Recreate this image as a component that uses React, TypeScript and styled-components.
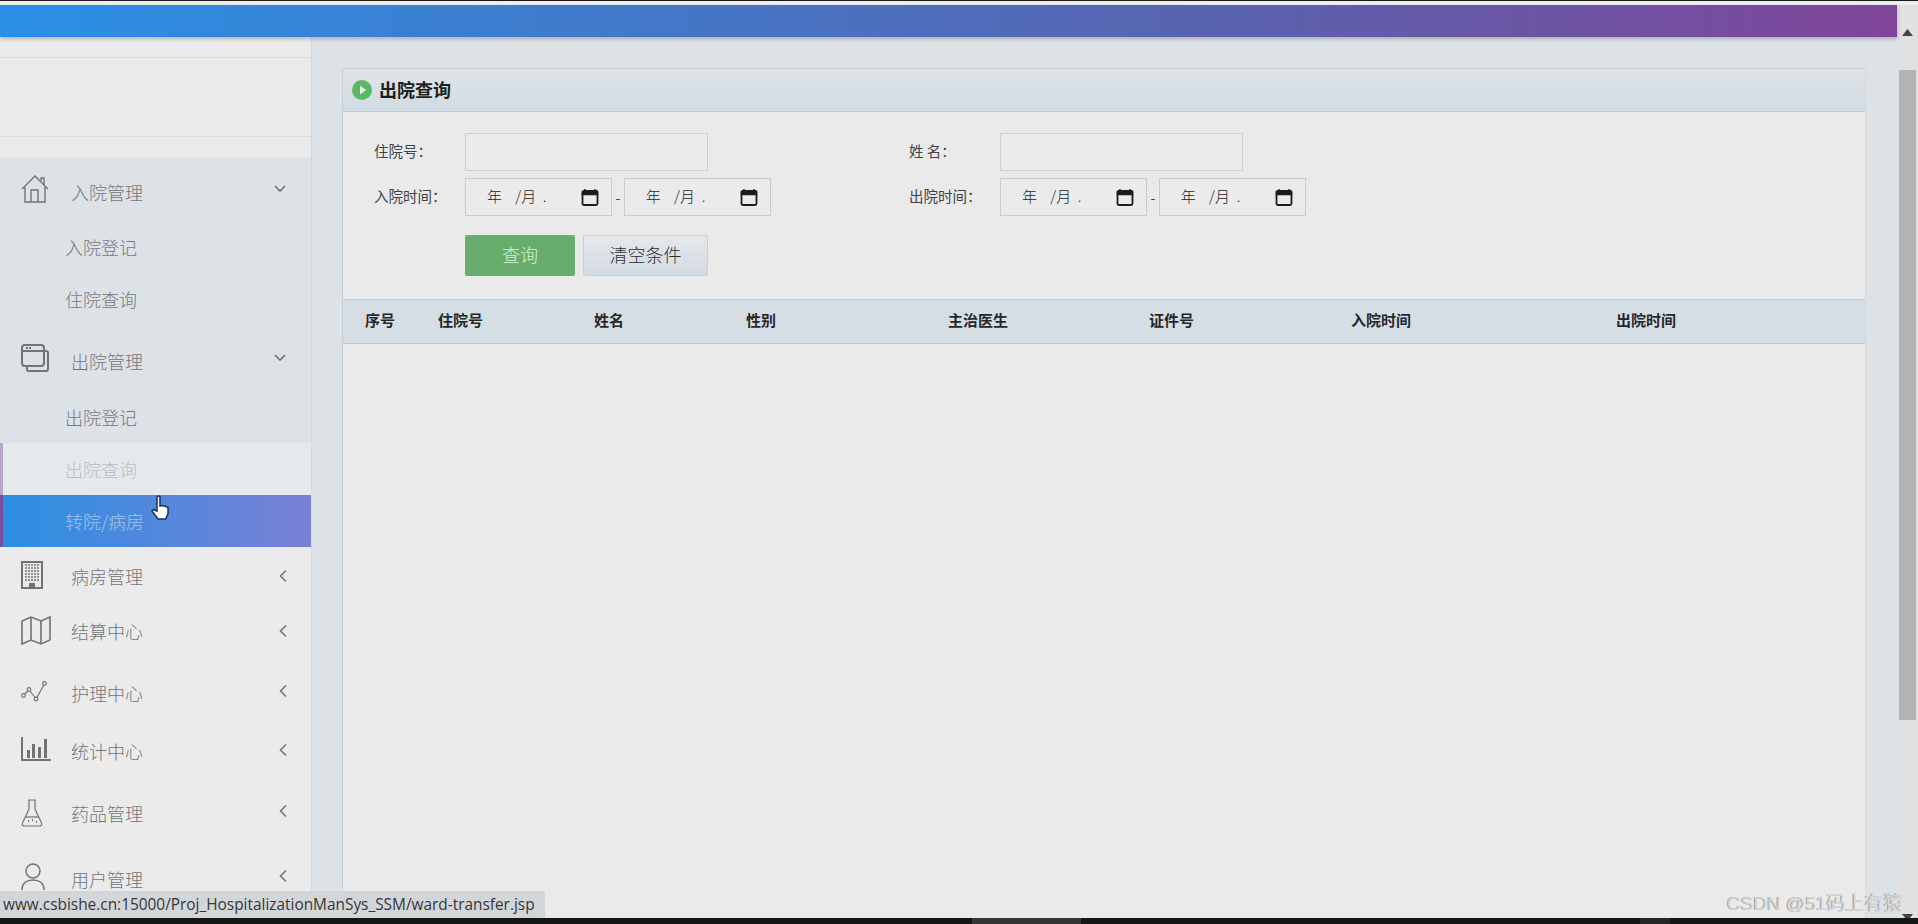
import React from "react";
import styled, { createGlobalStyle } from "styled-components";

const Global = createGlobalStyle`
  html, body { margin: 0; padding: 0; height: 100%; overflow: hidden; background: #ebebeb; }
  * { box-sizing: border-box; }
  body { font-family: "Noto Sans CJK SC", "Liberation Sans", sans-serif; }
`;

const Root = styled.div`
  position: relative;
  width: 1918px;
  height: 924px;
  display: flex;
  flex-direction: column;
  overflow: hidden;
`;
const TopEdge = styled.div`
  height: 5px;
  flex: none;
  background: linear-gradient(to bottom, #1a1a1a 0, #1a1a1a 1px, #eef0f0 1px, #eef0f0 100%);
`;
const Body = styled.div`
  flex: 1;
  min-height: 0;
  display: flex;
`;
const Page = styled.div`
  flex: 1;
  min-width: 0;
  display: flex;
  flex-direction: column;
`;
const Header = styled.div`
  height: 32px;
  flex: none;
  background: linear-gradient(to right, #2a90e6, #5a62ae 65%, #80459a);
  box-shadow: 0 2px 4px rgba(90, 90, 100, 0.4);
  position: relative;
  z-index: 2;
`;
const Content = styled.div`
  flex: 1;
  min-height: 0;
  display: flex;
`;
const Sidebar = styled.aside`
  width: 312px;
  flex: none;
  background: #ebebeb;
  border-right: 1px solid #d3d9df;
  display: flex;
  flex-direction: column;
`;
const Band = styled.div`
  height: 20px;
  flex: none;
`;
const ProfileBox = styled.div`
  height: 80px;
  flex: none;
  border-top: 1px solid #dcdcdc;
  border-bottom: 1px solid #dcdcdc;
`;
const OpenGroup = styled.div`
  background: #dde2e7;
  flex: none;
`;
const MenuRow = styled.div<{ $h: number }>`
  height: ${(p) => p.$h}px;
  flex: none;
  display: flex;
  align-items: center;
  padding: 0 21px 0 21px;
  color: #6f7479;
`;
const IconSlot = styled.span<{ $lift?: number }>`
  width: 50px;
  flex: none;
  display: flex;
  align-items: center;
  margin-bottom: ${(p) => (p.$lift ?? 0) * 2}px;
`;
const ChevronSlot = styled.span<{ $lift?: number }>`
  flex: none;
  display: flex;
  align-items: center;
  margin-bottom: ${(p) => (p.$lift ?? 0) * 2}px;
`;
const MenuText = styled.span<{ $drop?: boolean }>`
  flex: 1;
  font-size: 18px;
  font-weight: 300;
  line-height: 24px;
  color: #71767b;
  padding-top: ${(p) => (p.$drop ? 5 : 0)}px;
`;
const SubRow = styled.div<{ $state?: "hover" | "active" }>`
  height: 52px;
  display: flex;
  align-items: center;
  padding-left: ${(p) => (p.$state ? 62 : 65)}px;
  font-size: 18px;
  font-weight: 300;
  color: ${(p) => (p.$state === "hover" ? "#b9bdc1" : p.$state === "active" ? "#a0c4ee" : "#75797e")};
  background: ${(p) =>
    p.$state === "hover"
      ? "#e6e9ec"
      : p.$state === "active"
      ? "linear-gradient(to right, #2b8fe3, #7a80d5)"
      : "transparent"};
  border-left: ${(p) =>
    p.$state === "hover" ? "3px solid #b9a3cf" : p.$state === "active" ? "3px solid #7d4ba0" : "0"};
`;
const Main = styled.main`
  flex: 1;
  min-width: 0;
  background: #dde2e7;
  padding: 31px 31px 0 30px;
  display: flex;
`;
const Panel = styled.section`
  flex: 1;
  background: #eaeaea;
  border-left: 1px solid #c6ced4;
  border-right: 1px solid #d3d9de;
  display: flex;
  flex-direction: column;
`;
const PanelHead = styled.div`
  height: 44px;
  flex: none;
  display: flex;
  align-items: center;
  gap: 7px;
  padding-left: 9px;
  border-top: 1px solid #c6ced4;
  border-bottom: 1px solid #bccad4;
  background: linear-gradient(to bottom, #e0e4e8, #d0dbe3);
`;
const PanelTitle = styled.h2`
  margin: 0 0 2px;
  font-size: 18px;
  font-weight: 700;
  color: #1c1e20;
`;
const Form = styled.div`
  height: 187px;
  flex: none;
  padding: 21px 0 0 31px;
  display: grid;
  grid-template-columns: 91px 444px 91px 1fr;
  grid-template-rows: 38px 38px 1fr;
  row-gap: 7px;
  align-items: start;
`;
const Label = styled.label`
  font-size: 14.5px;
  line-height: 36px;
  color: #3f4347;
  white-space: pre;
`;
const TextInput = styled.div`
  width: 243px;
  height: 38px;
  border: 1px solid #cdd0d2;
  background: #ebebeb;
`;
const DateRange = styled.div`
  display: flex;
  align-items: center;
  gap: 3.5px;
  font-size: 14px;
  color: #444;
`;
const DateBox = styled.div`
  width: 147px;
  height: 38px;
  flex: none;
  display: flex;
  align-items: center;
  padding: 0 12px 0 21px;
  border: 1px solid #c9cccf;
  background: #ebebeb;
  font-size: 15px;
  font-weight: 300;
  color: #222;
`;
const DateText = styled.span`
  flex: 1;
  white-space: pre;
  padding-bottom: 3px;
`;
const Actions = styled.div`
  grid-column: 2;
  display: flex;
  gap: 8px;
  padding-top: 12px;
`;
const SearchBtn = styled.button`
  width: 110px;
  height: 41px;
  padding: 0 0 3px;
  border: 0;
  border-radius: 2px;
  background: #68ad6b;
  color: #d8f0d8;
  font: 300 18px "Noto Sans CJK SC", sans-serif;
`;
const ClearBtn = styled.button`
  width: 125px;
  height: 41px;
  padding: 0 0 3px;
  border: 1px solid #c5d0da;
  border-radius: 2px;
  background: linear-gradient(to bottom, #e6e9ec, #d2dae2);
  color: #2b2f33;
  font: 300 18px "Noto Sans CJK SC", sans-serif;
`;
const TableHead = styled.div`
  height: 45px;
  flex: none;
  display: grid;
  grid-template-columns: 73px 156px 152px 202px 201px 202px 265px 1fr;
  align-items: center;
  padding: 0 0 4px 22px;
  background: #d5dde5;
  border-top: 1px solid #c4cbd1;
  border-bottom: 1px solid #bcc6ce;
  font-size: 15px;
  font-weight: 700;
  color: #25282b;
`;
const Scrollbar = styled.div`
  width: 21px;
  flex: none;
  background: #e1e1e1;
  display: flex;
  flex-direction: column;
  align-items: center;
`;
const ArrowSlot = styled.div`
  height: 65px;
  flex: none;
  padding-top: 12px;
`;
const ArrowSlotBottom = styled.div`
  height: 16px;
  flex: none;
  margin-top: auto;
`;
const Thumb = styled.div`
  width: 17px;
  height: 650px;
  flex: none;
  background: #b3b3b3;
`;
const BottomBar = styled.div`
  height: 6px;
  flex: none;
  background: #141616;
  display: flex;
  padding-left: 972px;
  gap: 559px;
`;
const TaskChip = styled.div<{ $w: number; $c: string }>`
  width: ${(p) => p.$w}px;
  background: ${(p) => p.$c};
`;
const StatusBar = styled.div`
  position: absolute;
  left: 0;
  top: 891px;
  width: 545px;
  height: 27px;
  padding-left: 3px;
  background: #d3d6d9;
  color: #33363a;
  font: 15.4px/27px "Open Sans", sans-serif;
  white-space: nowrap;
`;
const Watermark = styled.div`
  position: absolute;
  left: 1727px;
  top: 891px;
  font-family: "Liberation Sans", "Noto Sans CJK SC", sans-serif;
  font-size: 19px;
  line-height: 26px;
  color: #d4d4d4;
  text-shadow: -1px 0 0 #9c9c9c;
  white-space: nowrap;
`;
const Cursor = styled.svg`
  position: absolute;
  left: 150px;
  top: 495px;
`;
const ChevronDownSvg = styled.svg`
  margin-right: 3px;
`;

const stroke = { fill: "none", stroke: "currentColor", strokeWidth: 1.4 } as const;

const HouseIcon = () => (
  <svg width="28" height="28" viewBox="0 0 28 28" {...stroke}>
    <path d="M1 14 L14 1 L27 14" />
    <path d="M20 6 V3 H23 V10" />
    <path d="M4 12 V27 H24 V12" />
    <path d="M10 27 V15 H17 V27" />
  </svg>
);
const WindowsIcon = () => (
  <svg width="28" height="28" viewBox="0 0 28 28" fill="none" stroke="currentColor" strokeWidth="2">
    <rect x="1" y="1" width="22" height="21" rx="3" />
    <path d="M1 7 H23" />
    <path d="M23 7 H25 A2 2 0 0 1 27 9 V25 A2 2 0 0 1 25 27 H9 A2 2 0 0 1 6 25 V22" />
    <path d="M5 4 H11" strokeDasharray="2 1" />
  </svg>
);
const BuildingIcon = () => (
  <svg width="22" height="28" viewBox="0 0 22 28">
    <rect x="1" y="1" width="20" height="26" fill="none" stroke="currentColor" strokeWidth="2" />
    <path d="M4 4 H18 M4 7 H18 M4 10 H18 M4 13 H18 M4 16 H18 M4 19 H18" stroke="currentColor" strokeWidth="1.6" strokeDasharray="2 1" />
    <rect x="8" y="22" width="6" height="5" fill="currentColor" />
  </svg>
);
const MapIcon = () => (
  <svg width="30" height="29" viewBox="0 0 30 29" {...stroke} strokeWidth={1.6}>
    <path d="M1 5 L10 1 L20 5 L29 1 V24 L20 28 L10 24 L1 28 Z" />
    <path d="M10 1 V24 M20 5 V28" />
  </svg>
);
const LineIcon = () => (
  <svg width="26" height="22" viewBox="0 0 26 22" {...stroke} strokeWidth={1.2}>
    <circle cx="2.5" cy="14.5" r="1.8" />
    <circle cx="8" cy="8.5" r="1.8" />
    <circle cx="15" cy="18" r="1.8" />
    <circle cx="23.5" cy="2.5" r="1.8" />
    <path d="M3.7 13 L6.8 10 M9 10 L14 16.5 M16 16.2 L22.7 4.2" />
  </svg>
);
const BarsIcon = () => (
  <svg width="30" height="24" viewBox="0 0 30 24">
    <path d="M1 0 V23 H30" fill="none" stroke="currentColor" strokeWidth="2" />
    <path d="M6 13 h3 v8 h-3z M11 7 h3 v14 h-3z M17 10 h3 v11 h-3z M23 2 h3 v19 h-3z" fill="currentColor" />
  </svg>
);
const FlaskIcon = () => (
  <svg width="22" height="28" viewBox="0 0 22 28" {...stroke} strokeWidth={1.2}>
    <path d="M7 1 H15 M8 1 V10 L1.5 24 A2 2 0 0 0 3.5 27 H18.5 A2 2 0 0 0 20.5 24 L14 10 V1" />
    <path d="M4.5 18 H17.5" />
    <path d="M7 22 h1 M11 21 h1 M15 23 h1" strokeWidth="2" />
  </svg>
);
const UserIcon = () => (
  <svg width="24" height="28" viewBox="0 0 24 28" {...stroke} strokeWidth={1.5}>
    <circle cx="12" cy="8" r="7" />
    <path d="M1 27 C1 20 6 17 12 17 C18 17 23 20 23 27" />
  </svg>
);
const ChevronDown = () => (
  <ChevronDownSvg width="14" height="8" viewBox="0 0 14 8" fill="none" stroke="currentColor" strokeWidth="1.6">
    <path d="M2 1 L7 6 L12 1" />
  </ChevronDownSvg>
);
const ChevronLeft = () => (
  <svg width="14" height="14" viewBox="0 0 14 14" fill="none" stroke="currentColor" strokeWidth="1.6">
    <path d="M10 1.5 L4.5 7 L10 12.5" />
  </svg>
);
const CalendarIcon = () => (
  <svg width="18" height="18" viewBox="0 0 18 18" fill="none">
    <rect x="1.5" y="3" width="15" height="14" rx="1.5" stroke="#1c1c1c" strokeWidth="1.8" />
    <path d="M1.5 3.5 H16.5 V6.5 H1.5 Z M4 1 V3 M14 1 V3" fill="#1c1c1c" stroke="#1c1c1c" strokeWidth="1.4" />
  </svg>
);
const PlayBadge = () => (
  <svg width="20" height="20" viewBox="0 0 20 20">
    <circle cx="10" cy="10" r="10" fill="#5cb765" />
    <path d="M8 5.5 L14 10 L8 14.5 Z" fill="#e4efe4" />
  </svg>
);
const Up = () => (
  <svg width="11" height="7" viewBox="0 0 11 7">
    <path d="M5.5 0 L11 7 H0 Z" fill="#444" />
  </svg>
);
const Down = () => (
  <svg width="11" height="7" viewBox="0 0 11 7">
    <path d="M5.5 7 L11 0 H0 Z" fill="#444" />
  </svg>
);

const DateField = () => (
  <DateBox>
    <DateText>{"年    /月  ."}</DateText>
    <CalendarIcon />
  </DateBox>
);

const closedMenu = [
  { label: "病房管理", icon: <BuildingIcon />, h: 58, iconLift: 1, chevLift: 0 },
  { label: "结算中心", icon: <MapIcon />, h: 52, iconLift: 1, chevLift: 0 },
  { label: "护理中心", icon: <LineIcon />, h: 72, iconLift: 1, chevLift: 2 },
  { label: "统计中心", icon: <BarsIcon />, h: 44, iconLift: 2, chevLift: 1 },
  { label: "药品管理", icon: <FlaskIcon />, h: 80, iconLift: 0, chevLift: 2 },
  { label: "用户管理", icon: <UserIcon />, h: 52, iconLift: 2, chevLift: 3 },
];

const columns = ["序号", "住院号", "姓名", "性别", "主治医生", "证件号", "入院时间", "出院时间"];

export default function App() {
  return (
    <Root>
      <Global />
      <TopEdge />
      <Body>
        <Page>
          <Header />
          <Content>
            <Sidebar>
              <Band />
              <ProfileBox />
              <Band />
              <OpenGroup>
                <MenuRow $h={64}>
                  <IconSlot><HouseIcon /></IconSlot>
                  <MenuText $drop>入院管理</MenuText>
                  <ChevronDown />
                </MenuRow>
                <SubRow>入院登记</SubRow>
                <SubRow>住院查询</SubRow>
                <MenuRow $h={66}>
                  <IconSlot><WindowsIcon /></IconSlot>
                  <MenuText $drop>出院管理</MenuText>
                  <ChevronDown />
                </MenuRow>
                <SubRow>出院登记</SubRow>
              </OpenGroup>
              <SubRow $state="hover">出院查询</SubRow>
              <SubRow $state="active">转院/病房</SubRow>
              {closedMenu.map((m) => (
                <MenuRow key={m.label} $h={m.h}>
                  <IconSlot $lift={m.iconLift}>{m.icon}</IconSlot>
                  <MenuText>{m.label}</MenuText>
                  <ChevronSlot $lift={m.chevLift}><ChevronLeft /></ChevronSlot>
                </MenuRow>
              ))}
            </Sidebar>
            <Main>
              <Panel>
                <PanelHead>
                  <PlayBadge />
                  <PanelTitle>出院查询</PanelTitle>
                </PanelHead>
                <Form>
                  <Label>住院号：</Label>
                  <TextInput />
                  <Label>{"姓 名："}</Label>
                  <TextInput />
                  <Label>入院时间：</Label>
                  <DateRange><DateField />-<DateField /></DateRange>
                  <Label>出院时间：</Label>
                  <DateRange><DateField />-<DateField /></DateRange>
                  <Actions>
                    <SearchBtn>查询</SearchBtn>
                    <ClearBtn>清空条件</ClearBtn>
                  </Actions>
                </Form>
                <TableHead>
                  {columns.map((c) => <span key={c}>{c}</span>)}
                </TableHead>
              </Panel>
            </Main>
          </Content>
        </Page>
        <Scrollbar>
          <ArrowSlot><Up /></ArrowSlot>
          <Thumb />
          <ArrowSlotBottom><Down /></ArrowSlotBottom>
        </Scrollbar>
      </Body>
      <BottomBar>
        <TaskChip $w={109} $c="#333536" />
        <TaskChip $w={30} $c="#232526" />
      </BottomBar>
      <StatusBar>www.csbishe.cn:15000/Proj_HospitalizationManSys_SSM/ward-transfer.jsp</StatusBar>
      <Watermark>CSDN @51码上有猿</Watermark>
      <Cursor width="22" height="26" viewBox="0 0 22 26">
        <path d="M7 2 a1.6 1.6 0 0 1 3 0 V11 L12 10.5 L14 11 L16 11.5 L18 12.5 V19 L15.5 24 H8 L2 16 L3.5 14.5 L7 16 Z" fill="#fff" stroke="#15325c" strokeWidth="1.5" />
      </Cursor>
    </Root>
  );
}
